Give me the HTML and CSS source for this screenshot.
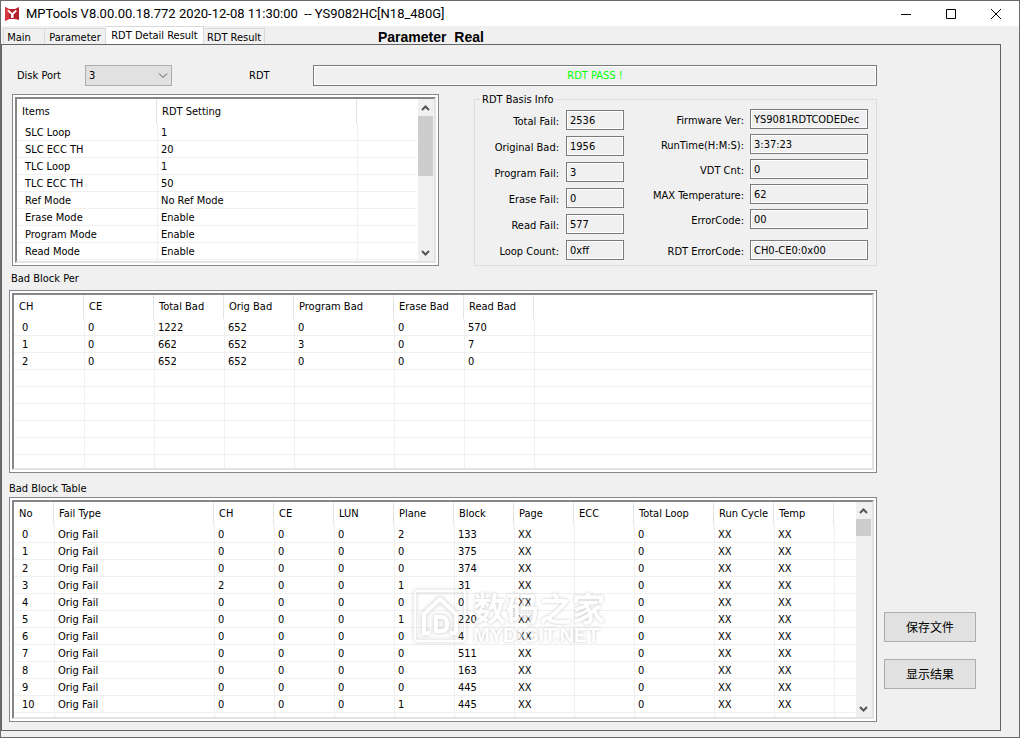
FILE: index.html
```html
<!DOCTYPE html>
<html lang="en">
<head>
<meta charset="utf-8">
<title>MPTools</title>
<link rel="stylesheet" href="styles.css">
</head>
<body>
<div class="window">
  <header class="titlebar">
    <svg class="logo" viewBox="0 0 14 14" aria-hidden="true">
      <path d="M0 0 L4 2 H10 L14 0 V13 L10 12 H4 L0 14 Z" fill="#b5202c"/>
      <path d="M0 0 L4 2 V12 L0 14 Z" fill="#d8383f"/>
      <path d="M2 3.500 L6 7.500 V11 H8.500 V7.500 L12 4 L10.500 3 L7.200 6 L4 3 Z" fill="#fff"/>
    </svg>
    <h1 class="caption">MPTools V8.00.00.18.772 2020-12-08 11:30:00&nbsp; -- YS9082HC[N18_480G]</h1>
    <div class="controls">
      <button class="control" aria-label="Minimize"><svg viewBox="0 0 10 10"><path d="M0 5.500H10"/></svg></button>
      <button class="control" aria-label="Maximize"><svg viewBox="0 0 10 10"><path d="M.5 .5H9.500V9.500H.5Z"/></svg></button>
      <button class="control" aria-label="Close"><svg viewBox="0 0 10 10"><path d="M0 0L10 10M10 0L0 10"/></svg></button>
    </div>
  </header>

  <nav class="tabs">
    <button class="tab tab-main">Main</button>
    <button class="tab tab-param">Parameter</button>
    <button class="tab tab-detail selected">RDT Detail Result</button>
    <button class="tab tab-result">RDT Result</button>
    <strong class="mode">Parameter&nbsp; Real</strong>
  </nav>

  <main class="panel">
    <div class="content">
      <div class="port-row">
        <label class="port-label" for="port">Disk Port</label>
        <span class="combo">
          <select id="port"><option>3</option></select>
          <svg class="chevron" viewBox="0 0 10 6" aria-hidden="true"><path d="M1 .5L5 4.500L9 .5"/></svg>
        </span>
        <label class="rdt-label" for="status">RDT</label>
        <input class="field status" id="status" value="RDT PASS !" readonly>
      </div>

      <div class="info-row">
        <div class="listbox settings">
          <div class="view">
            <div class="rows">
              <table>
                <colgroup><col class="w140"><col class="w200"><col></colgroup>
                <thead><tr><th>Items</th><th>RDT Setting</th><th></th></tr></thead>
                <tbody>
                  <tr><td>SLC Loop</td><td>1</td><td></td></tr>
                  <tr><td>SLC ECC TH</td><td>20</td><td></td></tr>
                  <tr><td>TLC Loop</td><td>1</td><td></td></tr>
                  <tr><td>TLC ECC TH</td><td>50</td><td></td></tr>
                  <tr><td>Ref Mode</td><td>No Ref Mode</td><td></td></tr>
                  <tr><td>Erase Mode</td><td>Enable</td><td></td></tr>
                  <tr><td>Program Mode</td><td>Enable</td><td></td></tr>
                  <tr><td>Read Mode</td><td>Enable</td><td></td></tr>
                  <tr><td></td><td></td><td></td></tr>
                </tbody>
              </table>
            </div>
            <div class="scrollbar">
              <svg class="arrow" viewBox="0 0 15 17" aria-hidden="true"><path d="M4 11L7.500 7.500L11 11"/></svg>
              <div class="track"><div class="thumb thumb-long"></div></div>
              <svg class="arrow" viewBox="0 0 15 17" aria-hidden="true"><path d="M4 7L7.500 10.500L11 7"/></svg>
            </div>
          </div>
        </div>

        <fieldset class="group">
          <legend>RDT Basis Info</legend>
          <div class="columns">
            <div class="counts">
              <label for="f1">Total Fail:</label><input class="field" id="f1" value="2536" readonly>
              <label for="f2">Original Bad:</label><input class="field" id="f2" value="1956" readonly>
              <label for="f3">Program Fail:</label><input class="field" id="f3" value="3" readonly>
              <label for="f4">Erase Fail:</label><input class="field" id="f4" value="0" readonly>
              <label for="f5">Read Fail:</label><input class="field" id="f5" value="577" readonly>
              <label for="f6">Loop Count:</label><input class="field" id="f6" value="0xff" readonly>
            </div>
            <div class="details">
              <label for="g1">Firmware Ver:</label><input class="field" id="g1" value="YS9081RDTCODEDec  7" readonly>
              <label for="g2">RunTime(H:M:S):</label><input class="field" id="g2" value="3:37:23" readonly>
              <label for="g3">VDT Cnt:</label><input class="field" id="g3" value="0" readonly>
              <label for="g4">MAX Temperature:</label><input class="field" id="g4" value="62" readonly>
              <label for="g5">ErrorCode:</label><input class="field" id="g5" value="00" readonly>
              <label for="g6">RDT ErrorCode:</label><input class="field" id="g6" value="CH0-CE0:0x00" readonly>
            </div>
          </div>
        </fieldset>
      </div>

      <h2 class="heading heading-per">Bad Block Per</h2>
      <div class="listbox per">
        <div class="view">
          <div class="rows">
            <table>
              <colgroup><col class="w70"><col class="w70"><col class="w70"><col class="w70"><col class="w100"><col class="w70"><col class="w70"><col></colgroup>
              <thead><tr><th>CH</th><th>CE</th><th>Total Bad</th><th>Orig Bad</th><th>Program Bad</th><th>Erase Bad</th><th>Read Bad</th><th></th></tr></thead>
              <tbody>
                <tr><td>0</td><td>0</td><td>1222</td><td>652</td><td>0</td><td>0</td><td>570</td><td></td></tr>
                <tr><td>1</td><td>0</td><td>662</td><td>652</td><td>3</td><td>0</td><td>7</td><td></td></tr>
                <tr><td>2</td><td>0</td><td>652</td><td>652</td><td>0</td><td>0</td><td>0</td><td></td></tr>
                <tr><td></td><td></td><td></td><td></td><td></td><td></td><td></td><td></td></tr>
                <tr><td></td><td></td><td></td><td></td><td></td><td></td><td></td><td></td></tr>
                <tr><td></td><td></td><td></td><td></td><td></td><td></td><td></td><td></td></tr>
                <tr><td></td><td></td><td></td><td></td><td></td><td></td><td></td><td></td></tr>
                <tr><td></td><td></td><td></td><td></td><td></td><td></td><td></td><td></td></tr>
                <tr><td></td><td></td><td></td><td></td><td></td><td></td><td></td><td></td></tr>
              </tbody>
            </table>
          </div>
        </div>
      </div>

      <h2 class="heading heading-table">Bad Block Table</h2>
      <div class="listbox blocks">
        <div class="view">
          <div class="rows">
            <table>
              <colgroup><col class="w40"><col class="w160"><col class="w60"><col class="w60"><col class="w60"><col class="w60"><col class="w60"><col class="w60"><col class="w60"><col class="w80"><col class="w60"><col class="w60"><col></colgroup>
              <thead><tr><th>No</th><th>Fail Type</th><th>CH</th><th>CE</th><th>LUN</th><th>Plane</th><th>Block</th><th>Page</th><th>ECC</th><th>Total Loop</th><th>Run Cycle</th><th>Temp</th><th></th></tr></thead>
              <tbody>
                <tr><td>0</td><td>Orig Fail</td><td>0</td><td>0</td><td>0</td><td>2</td><td>133</td><td>XX</td><td></td><td>0</td><td>XX</td><td>XX</td><td></td></tr>
                <tr><td>1</td><td>Orig Fail</td><td>0</td><td>0</td><td>0</td><td>0</td><td>375</td><td>XX</td><td></td><td>0</td><td>XX</td><td>XX</td><td></td></tr>
                <tr><td>2</td><td>Orig Fail</td><td>0</td><td>0</td><td>0</td><td>0</td><td>374</td><td>XX</td><td></td><td>0</td><td>XX</td><td>XX</td><td></td></tr>
                <tr><td>3</td><td>Orig Fail</td><td>2</td><td>0</td><td>0</td><td>1</td><td>31</td><td>XX</td><td></td><td>0</td><td>XX</td><td>XX</td><td></td></tr>
                <tr><td>4</td><td>Orig Fail</td><td>0</td><td>0</td><td>0</td><td>0</td><td>0</td><td>XX</td><td></td><td>0</td><td>XX</td><td>XX</td><td></td></tr>
                <tr><td>5</td><td>Orig Fail</td><td>0</td><td>0</td><td>0</td><td>1</td><td>220</td><td>XX</td><td></td><td>0</td><td>XX</td><td>XX</td><td></td></tr>
                <tr><td>6</td><td>Orig Fail</td><td>0</td><td>0</td><td>0</td><td>0</td><td>4</td><td>XX</td><td></td><td>0</td><td>XX</td><td>XX</td><td></td></tr>
                <tr><td>7</td><td>Orig Fail</td><td>0</td><td>0</td><td>0</td><td>0</td><td>511</td><td>XX</td><td></td><td>0</td><td>XX</td><td>XX</td><td></td></tr>
                <tr><td>8</td><td>Orig Fail</td><td>0</td><td>0</td><td>0</td><td>0</td><td>163</td><td>XX</td><td></td><td>0</td><td>XX</td><td>XX</td><td></td></tr>
                <tr><td>9</td><td>Orig Fail</td><td>0</td><td>0</td><td>0</td><td>0</td><td>445</td><td>XX</td><td></td><td>0</td><td>XX</td><td>XX</td><td></td></tr>
                <tr><td>10</td><td>Orig Fail</td><td>0</td><td>0</td><td>0</td><td>1</td><td>445</td><td>XX</td><td></td><td>0</td><td>XX</td><td>XX</td><td></td></tr>
                <tr><td></td><td>Orig Fail</td><td></td><td></td><td></td><td></td><td></td><td></td><td></td><td></td><td></td><td></td><td></td></tr>
              </tbody>
            </table>
          </div>
          <div class="scrollbar">
            <svg class="arrow" viewBox="0 0 15 17" aria-hidden="true"><path d="M4 11L7.500 7.500L11 11"/></svg>
            <div class="track"><div class="thumb"></div></div>
            <svg class="arrow" viewBox="0 0 15 17" aria-hidden="true"><path d="M4 7L7.500 10.500L11 7"/></svg>
          </div>
        </div>
        <div class="watermark">
          <svg class="mark" viewBox="0 0 54 54" aria-hidden="true">
            <rect x="2" y="2" width="50" height="50" rx="3" stroke-width="2"/>
            <path d="M17 44H11V25L27 10L43 25V44H37"/>
            <path d="M23 28H28Q34 28 34 35T28 42H23Z"/>
          </svg>
          <div class="words"><span class="cn">数码之家</span><span class="en">MYDIGIT.NET</span></div>
        </div>
      </div>
    </div>

    <aside class="actions">
      <button class="action">保存文件</button>
      <button class="action">显示结果</button>
    </aside>
  </main>
</div>
</body>
</html>
```
FILE: styles.css
```css
* { box-sizing: border-box; }

body {
  margin: 0;
  background: #f0f0f0;
  color: #000;
  font: 11px/16px "DejaVu Sans Condensed", "Noto Sans CJK SC", sans-serif;
}

button, input, select { font: inherit; color: inherit; }

.window {
  display: flex;
  flex-direction: column;
  min-height: 100vh;
  padding-bottom: 6px;
  border: 1px solid #6b6b6b;
}

/* Title bar */
.titlebar {
  display: flex;
  align-items: center;
  height: 25px;
  padding: 0 1px 0 4px;
  background: #fff;
}
.logo { width: 14px; height: 14px; margin-right: 7px; }
.caption {
  flex: 1;
  margin: 0;
  font: 13px/24px Roboto, sans-serif;
  white-space: nowrap;
}
.controls { display: flex; }
.control {
  width: 45px;
  height: 24px;
  padding: 0;
  border: 0;
  background: none;
}
.control svg {
  display: block;
  width: 10px;
  height: 10px;
  margin: 0 auto;
  fill: none;
  stroke: #000;
  overflow: visible;
}

/* Tabs */
.tabs {
  display: flex;
  align-items: flex-end;
  height: 18px;
  padding-left: 2px;
}
.tab {
  height: 16px;
  padding: 0;
  border: 1px solid #d9d9d9;
  border-width: 1px 1px 0 0;
  background: #f0f0f0;
  line-height: 18px;
  white-space: nowrap;
}
.tab-main { width: 42px; padding-right: 10px; border-left-width: 1px; }
.tab-param { width: 61px; }
.tab-detail { width: 98px; }
.tab-result { width: 61px; }
.tab.selected { height: 18px; background: #fff; line-height: 16px; }
.mode {
  margin-left: 113px;
  font: bold 14px/14px "Liberation Sans", sans-serif;
}

/* Tab page */
.panel {
  display: flex;
  flex: 1;
  gap: 7px;
  margin-right: 18px;
  padding: 20px 24px 8px 7px;
  border: 1px solid #646464;
}
.content { flex: 1; min-width: 0; }

.field {
  width: 100%;
  height: 20px;
  padding: 0 0 0 3px;
  border: 1px solid #7a7a7a;
  outline: 1px solid #fff;
  outline-offset: -2px;
  background: #f0f0f0;
}

.port-row { display: flex; align-items: center; height: 21px; padding-left: 8px; }
.port-label { width: 68px; }
.combo { position: relative; width: 87px; height: 21px; }
.combo select {
  width: 100%;
  height: 100%;
  padding: 0 3px;
  border: 1px solid #adadad;
  border-radius: 0;
  background: #e1e1e1;
  appearance: none;
}
.chevron {
  position: absolute;
  top: 8px;
  right: 4px;
  width: 10px;
  height: 6px;
  fill: none;
  stroke: #555;
}
.rdt-label { width: 64px; margin-left: 77px; }
.status { flex: 1; height: 21px; padding: 0; color: #0f0; text-align: center; }

/* List boxes */
.info-row { display: flex; gap: 35px; padding: 5px 0 0 3px; }
.listbox {
  position: relative;
  padding: 2px;
  border: 1px solid #828790;
  background: #fff;
}
.view {
  display: flex;
  height: 100%;
  border: 2px solid;
  border-color: #868686 #e3e3e3 #e3e3e3 #868686;
}
.settings { flex: none; width: 427px; height: 172px; margin-top: 3px; }
.settings th { height: 25px; }
.per { height: 183px; }
.blocks { height: 225px; }
.rows { flex: 1; overflow: hidden; }

table { width: 100%; table-layout: fixed; border-spacing: 0; }
th, td { text-align: left; white-space: nowrap; font-weight: normal; }
th { height: 24px; padding: 0 0 0 5px; border-right: 1px solid #e5e5e5; }
td { height: 17px; padding: 2px 0 0 3px; line-height: 14px; border-bottom: 1px solid #f0f0f0; }
td + td { border-left: 1px solid #f0f0f0; }
td:first-child { padding-left: 8px; }
th:last-child { border-right: 0; }
.w40 { width: 40px; }
.w60 { width: 60px; }
.w70 { width: 70px; }
.w80 { width: 80px; }
.w100 { width: 100px; }
.w140 { width: 140px; }
.w160 { width: 160px; }
.w200 { width: 200px; }

.scrollbar {
  display: flex;
  flex-direction: column;
  width: 17px;
  padding-right: 1px;
  border-left: 1px solid #fff;
  background: #f0f0f0;
}
.arrow { width: 15px; height: 17px; fill: none; stroke: #555; stroke-width: 2; }
.track { flex: 1; }
.thumb { height: 17px; background: #cdcdcd; }
.thumb-long { height: 60px; }

/* Group box */
.group {
  flex: 1;
  min-width: 0;
  margin: 0;
  padding: 0 8px 0 0;
  border: 1px solid #dcdcdc;
}
legend { margin-left: 5px; padding: 2px 2px 0; line-height: 14px; }
.columns { display: grid; grid-template-columns: 149px 1fr; padding-top: 2px; }
.counts, .details { display: grid; align-content: start; }
.counts { grid-template-columns: 1fr 58px; gap: 6px 7px; padding-top: 1px; }
.details { grid-template-columns: 1fr 118px; gap: 5px 6px; }
.group label {
  height: 13px;
  margin-top: 4px;
  overflow: hidden;
  text-align: right;
}
.details .field:last-child { margin-top: 6px; }
.details label:nth-last-child(2) { margin-top: 10px; }

.heading { margin: 0; font-size: 11px; font-weight: normal; }
.heading-per { padding: 2px 0 0 2px; line-height: 22px; }
.heading-table { padding-top: 8px; line-height: 16px; }

/* Watermark over the block list */
.watermark {
  position: absolute;
  top: 91px;
  left: 403px;
  display: flex;
  gap: 6px;
  opacity: .7;
  pointer-events: none;
}
.mark {
  width: 54px;
  height: 54px;
  fill: none;
  stroke: #fff;
  stroke-width: 4;
  filter: drop-shadow(0 0 2px #aaa);
}
.words {
  display: flex;
  flex-direction: column;
  color: #fff;
  text-shadow: 0 0 3px #aaa;
}
.cn { font: bold 33px/36px "Noto Sans CJK SC", sans-serif; }
.en { font: bold 20px/20px "Liberation Sans", sans-serif; }

/* Buttons at the right */
.actions {
  display: flex;
  flex-direction: column;
  justify-content: flex-end;
  gap: 17px;
  width: 92px;
  padding-bottom: 33px;
}
.action {
  height: 30px;
  padding: 0;
  border: 1px solid #adadad;
  background: #e1e1e1;
  font: 12px/16px "Noto Sans CJK SC", sans-serif;
}
```
